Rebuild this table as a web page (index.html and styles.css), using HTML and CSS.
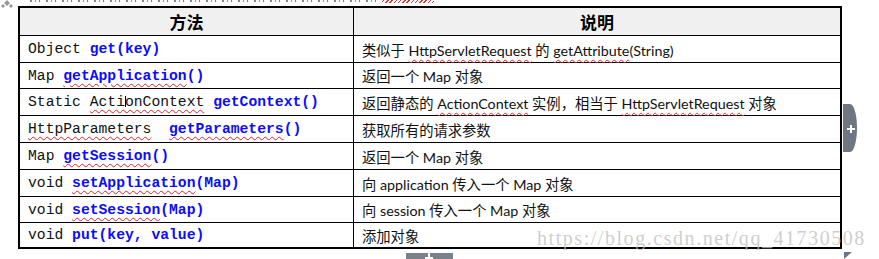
FILE: index.html
```html
<!DOCTYPE html>
<html lang="zh">
<head>
<meta charset="utf-8">
<title>ActionContext 方法</title>
<link rel="stylesheet" href="styles.css">
</head>
<body>
<div class="page">
  <div class="cut-line"><span class="cut-marks"></span><span class="cut-wave"></span></div>
  <div class="tbl">
    <div class="cell head left">方法</div>
    <div class="cell head">说明</div>

    <div class="cell code left"><span>Object <b class="m">get(key)</b></span></div>
    <div class="cell desc"><span>类似于 <u class="sp">HttpServletRequest</u> 的 <u class="sp">getAttribute</u>(String)</span></div>

    <div class="cell code left"><span>Map <b class="m"><u class="sp">getApplication</u>()</b></span></div>
    <div class="cell desc"><span>返回一个 Map 对象</span></div>

    <div class="cell code left"><span>Static <u class="sp">Acti<i class="caret"></i>onContext</u> <b class="m">getContext()</b></span></div>
    <div class="cell desc"><span>返回静态的 <u class="sp">ActionContext</u> 实例，相当于 <u class="sp">HttpServletRequest</u> 对象</span></div>

    <div class="cell code left"><span><u class="sp">HttpParameters</u>&nbsp; <b class="m"><u class="sp">getParameters</u>()</b></span></div>
    <div class="cell desc"><span>获取所有的请求参数</span></div>

    <div class="cell code left"><span>Map <b class="m"><u class="sp">getSession</u>()</b></span></div>
    <div class="cell desc"><span>返回一个 Map 对象</span></div>

    <div class="cell code left"><span>void <b class="m"><u class="sp">setApplication</u>(Map)</b></span></div>
    <div class="cell desc"><span>向 application 传入一个 Map 对象</span></div>

    <div class="cell code left"><span>void <b class="m"><u class="sp">setSession</u>(Map)</b></span></div>
    <div class="cell desc"><span>向 session 传入一个 Map 对象</span></div>

    <div class="cell code left last"><span>void <b class="m">put(key, value)</b></span></div>
    <div class="cell desc last"><span>添加对象</span></div>
  </div>
</div>

<svg class="move-handle" width="15" height="9" viewBox="0 0 15 9" aria-hidden="true">
  <path d="M7 0 L10 3 L7 6 L4 3 Z M3 4 L5 6 L3 8 L1 6 Z M11 4 L13 6 L11 8 L9 6 Z" fill="#9a9a9a"/>
</svg>
<div class="side-tab"><span class="plus"></span></div>
<div class="bottom-tab"><span class="bplus"></span></div>
<svg class="corner" width="14" height="8" viewBox="0 0 14 8" aria-hidden="true">
  <path d="M2 1 L10 1 L2 8 Z" fill="#6e7781"/>
</svg>
<div class="watermark">https://blog.csdn.net/qq_41730508</div>
</body>
</html>
```
FILE: styles.css
```css
html, body {
  margin: 0;
  padding: 0;
  background: #ffffff;
}

body {
  position: relative;
  width: 879px;
  height: 259px;
  overflow: hidden;
}

.page {
  padding-left: 18px;
}

.cut-line {
  height: 3px;
  margin-bottom: 3px;
  position: relative;
}

.cut-marks {
  position: absolute;
  left: 12px;
  top: 0;
  width: 352px;
  height: 2px;
  background: repeating-linear-gradient(90deg, #555 0 2px, transparent 2px 5px, #777 5px 6px, transparent 6px 9px, #444 9px 10px, transparent 10px 16px);
  opacity: 0.7;
}

.cut-wave {
  position: absolute;
  left: 364px;
  top: 0;
  width: 52px;
  height: 3px;
  background: repeating-linear-gradient(135deg, transparent 0 1px, #e03030 1px 2px, transparent 2px 3px);
}

.tbl {
  box-sizing: border-box;
  width: 824px;
  border: 2px solid #000;
  display: grid;
  grid-template-columns: 334px 1fr;
  grid-template-rows: 28px 27px 26px 27px 27px 27px 27px 26px 24px;
}

.cell {
  box-sizing: border-box;
  border-bottom: 1px solid #000;
  display: flex;
  align-items: center;
  padding-left: 8px;
  white-space: pre;
  color: #111;
}

.cell.left {
  border-right: 1px solid #000;
}

.cell.last {
  border-bottom: none;
}

.head {
  background: #f0f0f0;
  justify-content: center;
  padding-left: 0;
  font-family: "Noto Sans CJK SC", sans-serif;
  font-weight: 700;
  font-size: 17px;
  color: #000;
}

.code {
  font-family: "Liberation Mono", "Courier New", monospace;
  font-size: 14.7px;
}

.m {
  color: #0b0bff;
  font-weight: 700;
}

.desc {
  font-family: Lato, "Noto Sans CJK SC", sans-serif;
  font-size: 14.3px;
  color: #111;
}

.sp {
  text-decoration: underline wavy #e02020;
  text-decoration-thickness: 1px;
  text-underline-offset: 3px;
}

.caret {
  display: inline-block;
  width: 0;
  height: 11px;
  border-left: 1px solid #000;
  margin-right: -1px;
  vertical-align: -1px;
}

.move-handle {
  position: absolute;
  left: 0;
  top: 0;
}

.side-tab {
  position: absolute;
  left: 843px;
  top: 104px;
  width: 14px;
  height: 48px;
  background: #6e7781;
  border-radius: 0 7px 7px 0 / 0 24px 24px 0;
}

.plus, .bplus {
  position: absolute;
  background: #fff;
}

.plus {
  left: 4px;
  top: 24px;
  width: 8px;
  height: 2px;
}

.plus::after {
  content: "";
  position: absolute;
  left: 3px;
  top: -3px;
  width: 2px;
  height: 8px;
  background: #fff;
}

.bottom-tab {
  position: absolute;
  left: 406px;
  top: 253px;
  width: 47px;
  height: 8px;
  background: #7b8189;
}

.bplus {
  left: 22px;
  top: 0;
  width: 2px;
  height: 6px;
}

.bplus::after {
  content: "";
  position: absolute;
  left: -3px;
  top: 4px;
  width: 8px;
  height: 2px;
  background: #fff;
}

.corner {
  position: absolute;
  left: 842px;
  top: 251px;
}

.watermark {
  position: absolute;
  left: 537px;
  top: 227px;
  font-family: "Liberation Serif", "Times New Roman", serif;
  font-size: 20px;
  line-height: 22px;
  letter-spacing: 1.55px;
  color: rgba(190, 190, 190, 0.75);
  white-space: nowrap;
}
```
